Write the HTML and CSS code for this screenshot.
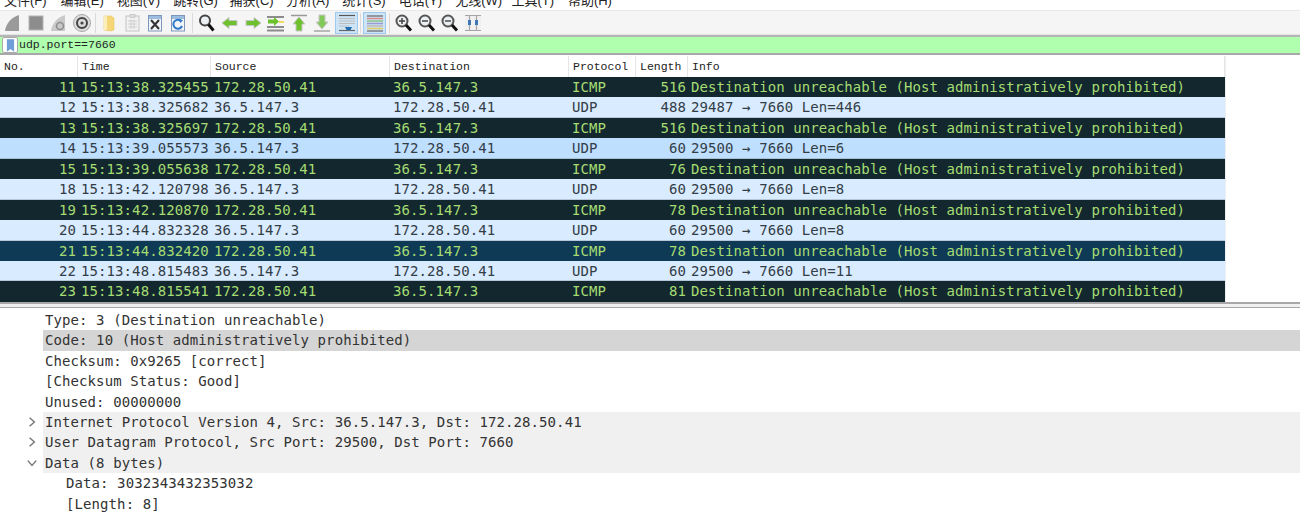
FILE: index.html
```html
<!DOCTYPE html>
<html lang="zh">
<head>
<meta charset="utf-8">
<title>Wireshark</title>
<link rel="stylesheet" href="styles.css">
</head>
<body>
<nav class="menu">
  <span>文件(F)</span><span>编辑(E)</span><span>视图(V)</span><span>跳转(G)</span><span>捕获(C)</span><span>分析(A)</span><span>统计(S)</span><span>电话(Y)</span><span>无线(W)</span><span>工具(T)</span><span>帮助(H)</span>
</nav>
<div class="toolbar">
  <span class="tool"><svg viewBox="0 0 20 20"><path d="M2 18C3 10 9 4 16 2V18Z" fill="#9a9a9a"/></svg></span>
  <span class="tool"><svg viewBox="0 0 20 20"><rect x="3" y="3" width="14" height="14" fill="#8d8d8d" stroke="#b5b5b5"/></svg></span>
  <span class="tool"><svg viewBox="0 0 20 20"><path d="M2 18C3 10 9 4 16 2V18Z" fill="#c9c9c9"/><circle cx="11" cy="13" r="3.5" fill="none" stroke="#8f8f8f" stroke-width="1.6"/></svg></span>
  <span class="tool"><svg viewBox="0 0 20 20"><circle cx="10" cy="10" r="8.5" fill="#dcdcdc" stroke="#a8a8a8"/><circle cx="10" cy="10" r="5" fill="none" stroke="#444" stroke-width="2"/><circle cx="10" cy="10" r="1.6" fill="#444"/></svg></span>
  <i class="sep"></i>
  <span class="tool"><svg viewBox="0 0 20 20"><path d="M5 3H12L15 5V17L12 18L5 17Z" fill="#f5d678" stroke="#e9c65e" stroke-width=".6"/><path d="M5 3H8V17H5Z" fill="#fbeeb9"/></svg></span>
  <span class="tool"><svg viewBox="0 0 20 20"><rect x="4" y="3" width="13" height="15" fill="#f2f2f2" stroke="#c4c4c4"/><rect x="8" y="1.5" width="5" height="3" fill="#ddd" stroke="#bbb" stroke-width=".6"/><path d="M6 8H15M6 11H15M6 14H15M9 6.500V16M12 6.500V16" stroke="#c8c8c8" stroke-width=".8"/></svg></span>
  <span class="tool"><svg viewBox="0 0 20 20"><rect x="3.500" y="2.500" width="13" height="15.500" fill="#f1f5f9" stroke="#7d97b8"/><rect x="4" y="3" width="12" height="3" fill="#9dbde0"/><path d="M6 7L14 16M14 7L6 16" stroke="#333" stroke-width="2"/></svg></span>
  <span class="tool"><svg viewBox="0 0 20 20"><rect x="3.500" y="2.500" width="13" height="15.500" fill="#f1f5f9" stroke="#7d97b8"/><rect x="4" y="3" width="12" height="3" fill="#9dbde0"/><path d="M14 13A4.500 4.500 0 1 1 13 8" fill="none" stroke="#2f78c8" stroke-width="2"/><path d="M11 5.500L15 7.500L12 10Z" fill="#2f78c8"/></svg></span>
  <i class="sep wide"></i>
  <span class="tool"><svg viewBox="0 0 20 20"><circle cx="8" cy="7.500" r="5" fill="#eef1f3" stroke="#444" stroke-width="2"/><path d="M11.500 11.500L16.500 17.500" stroke="#111" stroke-width="3"/></svg></span>
  <span class="tool"><svg viewBox="0 0 20 20"><path d="M2 10L9 4.500V7.500H17V12.500H9V15.500Z" fill="#6cc12c" stroke="#c6c6c6"/></svg></span>
  <span class="tool"><svg viewBox="0 0 20 20"><path d="M18 10L11 4.500V7.500H3V12.500H11V15.500Z" fill="#6cc12c" stroke="#c6c6c6"/></svg></span>
  <span class="tool"><svg viewBox="0 0 20 20"><path d="M1 3H18V5H1ZM1 13H18V15H1ZM1 16.500H18V18.500H1Z" fill="#8b8b8b"/><path d="M13 8H18V10H13Z" fill="#f0dc60"/><path d="M13 8.500L8 4V6.500H2V10.500H8V13Z" fill="#6cc12c"/></svg></span>
  <span class="tool"><svg viewBox="0 0 20 20"><path d="M2 2.500H18" stroke="#999" stroke-width="1.500"/><path d="M10 4L16 11H13V18H7V11H4Z" fill="#6cc12c" stroke="#c6c6c6"/></svg></span>
  <span class="tool"><svg viewBox="0 0 20 20"><path d="M2 18H18" stroke="#a5a5a5" stroke-width="1.500"/><path d="M10 16L16 9H13V2H7V9H4Z" fill="#83c95a" stroke="#c6c6c6"/></svg></span>
  <span class="tool on gapped"><svg viewBox="0 0 20 20"><path d="M2 2.500H18" stroke="#555" stroke-width="1.200"/><path d="M2 5.500H18M2 8H18M2 10.500H18M2 13H12" stroke="#bdbdbd" stroke-width="1"/><path d="M2 17.500H18" stroke="#666" stroke-width="1.200"/><path d="M8 14H15L13.500 17H9.500Z" fill="#1f6eb4"/></svg></span>
  <i class="sep mid-sep"></i>
  <span class="tool on"><svg viewBox="0 0 20 20"><path d="M2 3H18" stroke="#666" stroke-width="1.200"/><path d="M2 5.500H18" stroke="#d98a8a" stroke-width="1.500"/><path d="M2 8H18" stroke="#8ac58a" stroke-width="1.500"/><path d="M2 10.500H18" stroke="#9a9ad0" stroke-width="1.500"/><path d="M2 13H18" stroke="#b9b9b9" stroke-width="1.500"/><path d="M2 15.500H18" stroke="#e1cb66" stroke-width="1.500"/><path d="M2 18H18" stroke="#666" stroke-width="1.200"/></svg></span>
  <i class="sep wide"></i>
  <span class="tool"><svg viewBox="0 0 20 20"><circle cx="8" cy="8" r="5.500" fill="#eceff1" stroke="#555" stroke-width="2"/><path d="M12 12L17 17.500" stroke="#111" stroke-width="3"/><path d="M5 8H11M8 5V11" stroke="#444" stroke-width="1.500"/></svg></span>
  <span class="tool"><svg viewBox="0 0 20 20"><circle cx="8" cy="8" r="5.500" fill="#eceff1" stroke="#555" stroke-width="2"/><path d="M12 12L17 17.500" stroke="#111" stroke-width="3"/><path d="M5 8H11" stroke="#444" stroke-width="1.500"/></svg></span>
  <span class="tool"><svg viewBox="0 0 20 20"><circle cx="8" cy="8" r="5.500" fill="#eceff1" stroke="#555" stroke-width="2"/><path d="M12 12L17 17.500" stroke="#111" stroke-width="3"/><path d="M5 8H11" stroke="#777" stroke-width="2"/></svg></span>
  <span class="tool"><svg viewBox="0 0 20 20"><rect x="2" y="2" width="16" height="16" fill="#f0f0f0"/><path d="M2 2.500H18M2 17.500H18M6.500 2V18M13.500 2V18" stroke="#a5a5a5" stroke-width="1.200"/><path d="M5 7H8V12H5ZM12 7H15V12H12Z" fill="#3d78b5"/></svg></span>
</div>
<form class="filter">
  <span class="mark"><svg viewBox="0 0 10 14"><path d="M1 0H9V14L5 11L1 14Z" fill="#6f9fd6"/></svg></span>
  <span class="expr">udp.port==7660</span>
</form>
<section class="list">
  <div class="row head"><span>No.</span><span>Time</span><span>Source</span><span>Destination</span><span>Protocol</span><span>Length</span><span>Info</span></div>
  <div class="row dark"><span class="num">11</span><span>15:13:38.325455</span><span>172.28.50.41</span><span>36.5.147.3</span><span>ICMP</span><span class="num">516</span><span>Destination unreachable (Host administratively prohibited)</span></div>
  <div class="row light"><span class="num">12</span><span>15:13:38.325682</span><span>36.5.147.3</span><span>172.28.50.41</span><span>UDP</span><span class="num">488</span><span>29487 → 7660 Len=446</span></div>
  <div class="row dark"><span class="num">13</span><span>15:13:38.325697</span><span>172.28.50.41</span><span>36.5.147.3</span><span>ICMP</span><span class="num">516</span><span>Destination unreachable (Host administratively prohibited)</span></div>
  <div class="row mid"><span class="num">14</span><span>15:13:39.055573</span><span>36.5.147.3</span><span>172.28.50.41</span><span>UDP</span><span class="num">60</span><span>29500 → 7660 Len=6</span></div>
  <div class="row dark"><span class="num">15</span><span>15:13:39.055638</span><span>172.28.50.41</span><span>36.5.147.3</span><span>ICMP</span><span class="num">76</span><span>Destination unreachable (Host administratively prohibited)</span></div>
  <div class="row light"><span class="num">18</span><span>15:13:42.120798</span><span>36.5.147.3</span><span>172.28.50.41</span><span>UDP</span><span class="num">60</span><span>29500 → 7660 Len=8</span></div>
  <div class="row dark"><span class="num">19</span><span>15:13:42.120870</span><span>172.28.50.41</span><span>36.5.147.3</span><span>ICMP</span><span class="num">78</span><span>Destination unreachable (Host administratively prohibited)</span></div>
  <div class="row light"><span class="num">20</span><span>15:13:44.832328</span><span>36.5.147.3</span><span>172.28.50.41</span><span>UDP</span><span class="num">60</span><span>29500 → 7660 Len=8</span></div>
  <div class="row dark sel"><span class="num">21</span><span>15:13:44.832420</span><span>172.28.50.41</span><span>36.5.147.3</span><span>ICMP</span><span class="num">78</span><span>Destination unreachable (Host administratively prohibited)</span></div>
  <div class="row light"><span class="num">22</span><span>15:13:48.815483</span><span>36.5.147.3</span><span>172.28.50.41</span><span>UDP</span><span class="num">60</span><span>29500 → 7660 Len=11</span></div>
  <div class="row dark"><span class="num">23</span><span>15:13:48.815541</span><span>172.28.50.41</span><span>36.5.147.3</span><span>ICMP</span><span class="num">81</span><span>Destination unreachable (Host administratively prohibited)</span></div>
</section>
<div class="split"></div>
<section class="details">
  <div class="line"><span class="text">Type: 3 (Destination unreachable)</span></div>
  <div class="line picked"><span class="text">Code: 10 (Host administratively prohibited)</span></div>
  <div class="line"><span class="text">Checksum: 0x9265 [correct]</span></div>
  <div class="line"><span class="text">[Checksum Status: Good]</span></div>
  <div class="line"><span class="text">Unused: 00000000</span></div>
  <div class="line group"><svg class="arrow" viewBox="0 0 10 10"><path d="M3 1.500L7 5L3 8.500"/></svg><span class="text">Internet Protocol Version 4, Src: 36.5.147.3, Dst: 172.28.50.41</span></div>
  <div class="line group"><svg class="arrow" viewBox="0 0 10 10"><path d="M3 1.500L7 5L3 8.500"/></svg><span class="text">User Datagram Protocol, Src Port: 29500, Dst Port: 7660</span></div>
  <div class="line group"><svg class="arrow" viewBox="0 0 10 10"><path d="M1.500 3L5 7L8.500 3"/></svg><span class="text">Data (8 bytes)</span></div>
  <div class="line sub"><span class="text">Data: 3032343432353032</span></div>
  <div class="line sub"><span class="text">[Length: 8]</span></div>
</section>
</body>
</html>
```
FILE: styles.css
```css
* { box-sizing: border-box; }
html, body { margin: 0; height: 513px; overflow: hidden; background: #fff; }
body { font-family: "DejaVu Sans Mono", monospace; font-size: 14px; color: #333; }

.menu {
  height: 10px; overflow: hidden; display: flex; align-items: flex-end;
  padding-left: 4px; gap: 15.400px; background: #fff;
  font-family: "Liberation Sans", "Noto Sans CJK SC", sans-serif; font-size: 13px; line-height: 16px; color: #222;
}
.menu span { width: 41px; white-space: nowrap; margin-bottom: 1px; }

.toolbar {
  height: 25px; display: flex; align-items: center; padding-left: 1px;
  background: #f5f5f5; border-top: 1px solid #e8e8e8; border-bottom: 1px solid #e4e4e4;
}
.tool { width: 23px; height: 22px; display: flex; align-items: center; justify-content: center; flex: none; }
.tool svg { width: 20px; height: 20px; }
.tool.on { background: #cde4f7; border: 1px solid #9cc9ec; }
.tool.gapped { margin-left: 2px; }
.sep { width: 1px; height: 20px; background: #dadada; margin: 0 1.500px; flex: none; }
.sep.wide { margin: 0 2.500px; }
.sep.mid-sep { margin: 0 2px; }

.filter {
  height: 20px; display: flex; align-items: stretch; margin: 0;
  background: #afffaf; border-top: 2px solid #b5b5b5; border-bottom: 2px solid #a8a8a8;
}
.mark { width: 16px; margin-left: 2px; background: #fff; border: 1px solid #aaa; border-radius: 2px; display: flex; align-items: center; justify-content: center; }
.mark svg { width: 9px; height: 13px; }
.expr { font-family: "Liberation Mono", monospace; font-size: 11.500px; line-height: 16px; padding-left: 1px; color: #222; }

.list { width: 1226px; border-right: 1px solid #eee; margin-top: 1px; }
.row {
  display: grid; grid-template-columns: 78px 133px 179px 179px 67px 52px 1fr;
  height: 20.450px; line-height: 20px; white-space: nowrap; letter-spacing: .09px;
}
.row span { padding-left: 3px; overflow: hidden; }
.row .num { text-align: right; padding: 0 2px 0 0; }
.head {
  height: 21px; background: #fff; color: #222; letter-spacing: 0;
  font-family: "Liberation Mono", monospace; font-size: 11.500px; line-height: 21px;
}
.row.head span { border-right: 1px solid #e6e6e6; padding-left: 4px; }
.dark { background: #12272e; color: #a6dc72; }
.sel { background: #0e3a56; }
.light { background: #d9ebff; color: #333d46; box-shadow: inset 0 -1px #b4c6d8; }
.mid { background: #bfdfff; color: #333d46; box-shadow: inset 0 -1px #a6c0d8; }

.split { height: 8px; background: #f0f0f0; border-top: 2px solid #a8a8a8; border-bottom: 2px solid #fff; box-shadow: inset 0 -1px #a8a8a8; }

.details { display: flex; flex-direction: column; }
.line { height: 20.450px; line-height: 20px; margin-left: 43px; padding-left: 2px; position: relative; white-space: nowrap; letter-spacing: .09px; }
.picked { background: #d5d5d5; }
.group { background: #f0f0f0; }
.sub { padding-left: 23px; }
.arrow { position: absolute; left: -17px; top: 4px; width: 12px; height: 12px; fill: none; stroke: #777; stroke-width: 1.200; }
```
